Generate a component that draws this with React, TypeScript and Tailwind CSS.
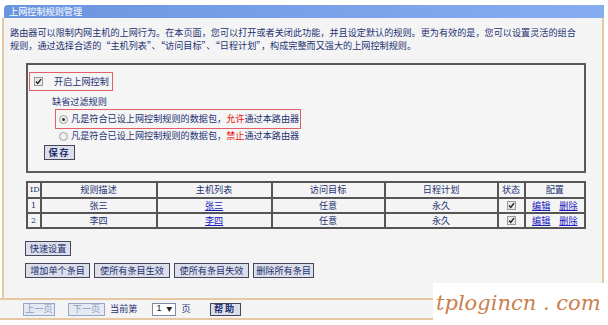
import React from "react";

const Btn = ({ children, w, className = "" }: { children: React.ReactNode; w: string; className?: string }) => (
  <div
    className={`h-[15px] ${w} flex items-center justify-center border border-[#44475a] bg-[#dcdfea] text-[#1d2f6f] leading-none whitespace-nowrap ${className}`}
  >
    {children}
  </div>
);

const Check = () => (
  <div className="w-[9px] h-[9px] border border-[#9a9a9a] bg-[#e8e8e8] flex items-center justify-center">
    <svg width="7" height="7" viewBox="0 0 7 7">
      <path d="M1 3.5 L2.8 5.5 L6 1.2" stroke="#222" strokeWidth="1.4" fill="none" />
    </svg>
  </div>
);

const Radio = ({ on }: { on?: boolean }) => (
  <div className="w-[9px] h-[9px] shrink-0 rounded-full border border-[#a0a0a0] bg-[#eeeeee] flex items-center justify-center">
    {on && <div className="w-[3px] h-[3px] rounded-full bg-[#333]" />}
  </div>
);

export default function App() {
  const cell = "border-2 border-[#555] text-center p-0 font-normal whitespace-nowrap";
  const rows = [
    { id: "1", name: "张三" },
    { id: "2", name: "李四" },
  ];
  return (
    <div
      className="w-[608px] h-[325px] bg-white relative overflow-hidden text-[9.15px] text-[#1d3273]"
      style={{ fontFamily: '"Noto Sans CJK SC", "Noto Sans", sans-serif' }}
    >
      <div className="pt-[5px] pl-[2px] w-[604px]">
        <div className="ml-[2px] h-[13px] rounded-tl-[4px] bg-gradient-to-r from-[#6a95df] to-[#86adf2] text-white flex items-center pl-[5px] leading-none">
          上网控制规则管理
        </div>
        <div className="h-[280px] border-l-2 border-r-2 border-[#e6c9a2] bg-[#f4f4f4] flex flex-col">
          <div className="pl-[6px] pt-[8px] leading-[13px] whitespace-nowrap">
            <div>路由器可以限制内网主机的上网行为。在本页面，您可以打开或者关闭此功能，并且设定默认的规则。更为有效的是，您可以设置灵活的组合</div>
            <div>规则，通过选择合适的“主机列表”、“访问目标”、“日程计划”，构成完整而又强大的上网控制规则。</div>
          </div>
          <div className="ml-[22px] mt-[11px] w-[560px] h-[110px] border-2 border-[#5a5a5a] bg-[#f5f5f5] flex flex-col">
            <div className="ml-[1px] mt-[7px] w-[84px] h-[19px] border border-[#e0606a] flex items-center pl-[4px] whitespace-nowrap">
              <Check />
              <span className="ml-[11px]">开启上网控制</span>
            </div>
            <div className="ml-[24px] mt-[4px] leading-[12px]">缺省过滤规则</div>
            <div className="ml-[27px] mt-[2px] w-[246px] h-[20px] border border-[#e0606a] flex items-center pl-[3px] whitespace-nowrap">
              <Radio on />
              <span className="ml-[3px]">
                凡是符合已设上网控制规则的数据包，<span className="text-[#e81010]">允许</span>通过本路由器
              </span>
            </div>
            <div className="ml-[31px] h-[14px] flex items-center whitespace-nowrap">
              <Radio />
              <span className="ml-[3px]">
                凡是符合已设上网控制规则的数据包，<span className="text-[#e81010]">禁止</span>通过本路由器
              </span>
            </div>
            <Btn w="w-[31px]" className="ml-[16px] mt-[2px] font-bold tracking-[2px]">
              保存
            </Btn>
          </div>
          <table className="ml-[22px] mt-[8px] w-[560px] border-collapse border-2 border-[#555] leading-none">
            <thead>
              <tr className="h-[16px]">
                <th className={`${cell} w-[12px] text-left pl-[2px]`} style={{ fontFamily: '"DejaVu Serif", serif', fontSize: "8px" }}>ID</th>
                <th className={`${cell} w-[116px]`}>规则描述</th>
                <th className={`${cell} w-[115px]`}>主机列表</th>
                <th className={`${cell} w-[113px]`}>访问目标</th>
                <th className={`${cell} w-[113px]`}>日程计划</th>
                <th className={`${cell} w-[27px]`}>状态</th>
                <th className={`${cell}`}>配置</th>
              </tr>
            </thead>
            <tbody>
              {rows.map((r) => (
                <tr key={r.id} className="h-[15px]">
                  <td className={`${cell} text-left pl-[3px]`} style={{ fontFamily: '"DejaVu Serif", serif', fontSize: "8px" }}>{r.id}</td>
                  <td className={cell}>{r.name}</td>
                  <td className={cell}>
                    <span className="text-[#1a1ac0] underline">{r.name}</span>
                  </td>
                  <td className={cell}>任意</td>
                  <td className={cell}>永久</td>
                  <td className={cell}>
                    <div className="flex justify-center">
                      <Check />
                    </div>
                  </td>
                  <td className={cell}>
                    <span className="text-[#1a1ac0] underline">编辑</span>
                    <span className="text-[#1a1ac0] underline ml-[9px]">删除</span>
                  </td>
                </tr>
              ))}
            </tbody>
          </table>
          <Btn w="w-[46px]" className="ml-[21px] mt-[12px]">快速设置</Btn>
          <div className="ml-[21px] mt-[7px] flex gap-[4px]">
            <Btn w="w-[65px]">增加单个条目</Btn>
            <Btn w="w-[76px]">使所有条目生效</Btn>
            <Btn w="w-[75px]">使所有条目失效</Btn>
            <Btn w="w-[61px]">删除所有条目</Btn>
          </div>
        </div>
      </div>
      <div className="w-[604px] h-[22px] border-t-2 border-b-2 border-[#e6c9a2] bg-[#f4f4f4] flex items-center pl-[23px] whitespace-nowrap">
        <div className="h-[13px] w-[32px] border border-[#95a6c9] bg-[#e5e9f1] text-[#8d9cc4] flex items-center justify-center leading-none">上一页</div>
        <div className="h-[13px] w-[37px] ml-[13px] border border-[#95a6c9] bg-[#e5e9f1] text-[#8d9cc4] flex items-center justify-center leading-none">下一页</div>
        <span className="ml-[5px]">当前第</span>
        <div className="ml-[15px] h-[13px] w-[24px] border border-[#7f8aa6] bg-white flex items-center justify-between px-[3px] leading-none text-[#222]">
          <span style={{ fontFamily: '"Liberation Sans", sans-serif' }}>1</span>
          <span className="text-[6px]">▼</span>
        </div>
        <span className="ml-[5px]">页</span>
        <Btn w="w-[31px]" className="ml-[19px] !h-[13px] font-bold tracking-[2px]">帮助</Btn>
      </div>
      <div className="absolute left-[433px] top-[283px] w-[175px] h-[42px] bg-white flex items-center pl-[3px] whitespace-nowrap">
        <span
          className="text-[21px] italic text-[#c9804c]"
          style={{ fontFamily: '"DejaVu Serif", serif', fontWeight: 200 }}
        >
          tplogincn . com
        </span>
      </div>
    </div>
  );
}
